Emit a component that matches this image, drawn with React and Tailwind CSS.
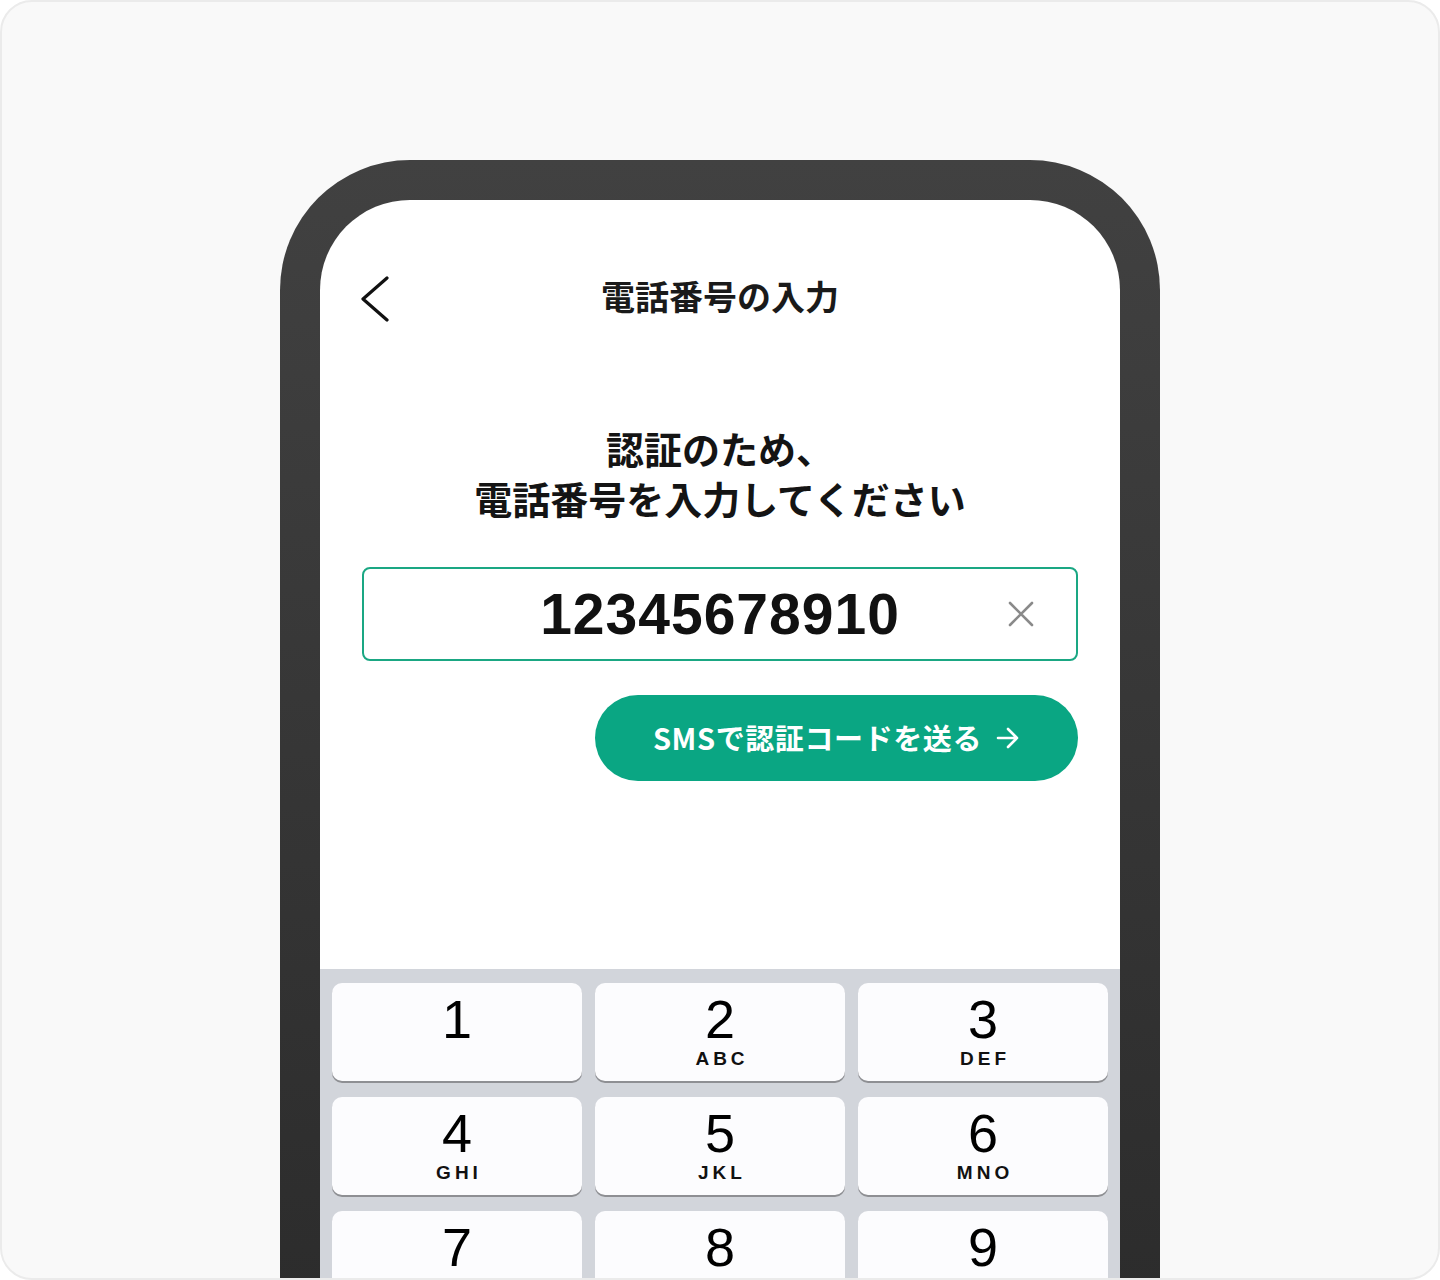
import React from 'react';

const jp = { fontFamily: '"Noto Sans CJK JP", "Noto Sans", sans-serif' };
const latin = { fontFamily: '"Liberation Sans", Arial, sans-serif' };

const keys = [
  { d: '1', l: '' },
  { d: '2', l: 'ABC' },
  { d: '3', l: 'DEF' },
  { d: '4', l: 'GHI' },
  { d: '5', l: 'JKL' },
  { d: '6', l: 'MNO' },
  { d: '7', l: 'PQRS' },
  { d: '8', l: 'TUV' },
  { d: '9', l: 'WXYZ' },
];

const Key = ({ d, l }) => (
  <div className="h-[98px] rounded-[10px] bg-[#fcfcfe] shadow-[0_2px_0_#8e8f93] flex flex-col items-center pt-[9px]">
    <span className="text-[54px] leading-[54px] text-black" style={latin}>{d}</span>
    {l && (
      <span className="mt-[3px] text-[19px] leading-[20px] font-bold tracking-[4px] pl-[4px] text-[#111]" style={latin}>
        {l}
      </span>
    )}
  </div>
);

export default function App() {
  return (
    <div className="w-[1440px] h-[1280px] bg-[#f9f9f9] border-2 border-[#ebebeb] rounded-[32px] overflow-hidden flex justify-center pt-[158px]">
      <div className="w-[880px] h-[1200px] shrink-0 rounded-t-[130px] bg-gradient-to-b from-[#414141] to-[#2b2b2b] px-[40px] pt-[40px]">
        <div className="h-full bg-white rounded-t-[90px] flex flex-col overflow-hidden">
          {/* header */}
          <div className="relative mt-[76px] h-[44px] flex items-center justify-center">
            <svg className="absolute left-[40px] top-0" width="30" height="46" viewBox="0 0 30 46" fill="none">
              <polyline points="27,2 3,23 27,44" stroke="#111" strokeWidth="3.2" strokeLinecap="round" strokeLinejoin="round" />
            </svg>
            <h1 className="text-[34px] font-bold text-[#1a1a1a] leading-[44px] -mt-[4px]" style={jp}>電話番号の入力</h1>
          </div>

          {/* heading */}
          <div className="mt-[103px] text-center text-[38px] leading-[50px] font-bold text-[#141414]" style={jp}>
            <p>認証のため、</p>
            <p>電話番号を入力してください</p>
          </div>

          {/* input */}
          <div className="mx-[42px] mt-[44px] h-[94px] rounded-[8px] border-2 border-[#1aa783] relative flex items-center justify-center">
            <span className="text-[57px] font-bold tracking-[1px] text-[#111] leading-none" style={latin}>12345678910</span>
            <svg className="absolute right-[42px] top-1/2 -translate-y-1/2" width="26" height="26" viewBox="0 0 26 26" fill="none">
              <path d="M2 2 L24 24 M24 2 L2 24" stroke="#8a8a8a" strokeWidth="2.6" strokeLinecap="round" />
            </svg>
          </div>

          {/* button */}
          <div className="mx-[42px] mt-[34px] flex justify-end">
            <button className="w-[483px] h-[86px] rounded-full bg-[#0aa683] text-white flex items-center justify-center gap-[14px]">
              <span className="text-[29px] font-bold tracking-[0.6px]" style={jp}>SMSで認証コードを送る</span>
              <svg width="24" height="22" viewBox="0 0 24 22" fill="none">
                <path d="M2 11 H21 M12 2 L21 11 L12 20" stroke="white" strokeWidth="2.6" strokeLinecap="round" strokeLinejoin="round" />
              </svg>
            </button>
          </div>

          {/* keypad */}
          <div className="mt-[188px] flex-1 bg-[#d2d5db] px-[12px] pt-[14px]">
            <div className="grid grid-cols-3 gap-x-[13px] gap-y-[16px]">
              {keys.map((k) => (
                <Key key={k.d} d={k.d} l={k.l} />
              ))}
            </div>
          </div>
        </div>
      </div>
    </div>
  );
}
